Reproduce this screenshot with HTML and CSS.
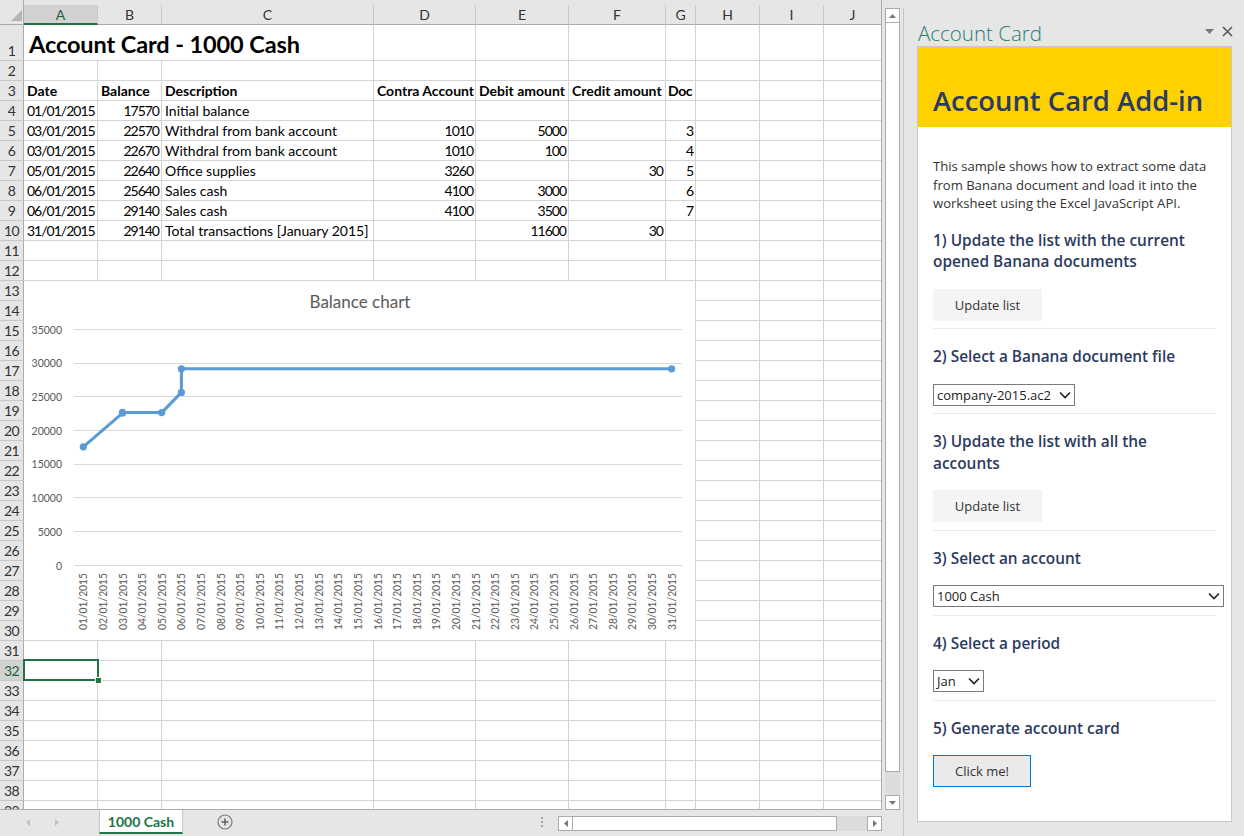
FILE: index.html
```html
<!DOCTYPE html>
<html lang="en">
<head>
<meta charset="utf-8">
<title>Account Card</title>
<link rel="stylesheet" href="styles.css">
</head>
<body>
<div class="excel">
  <div class="main">
    <div class="sheet">
      <div class="grid">
        <div class="corner"><svg width="11" height="11" viewBox="0 0 11 11"><path d="M11 0V11H0Z" fill="#b4b4b4"/></svg></div>
        <div class="h sel">A</div><div class="h">B</div><div class="h">C</div><div class="h">D</div><div class="h">E</div><div class="h">F</div><div class="h">G</div><div class="h">H</div><div class="h">I</div><div class="h">J</div>

        <div class="rh">1</div><div class="c title span3">Account Card - 1000 Cash</div><div class="c"></div><div class="c"></div><div class="c"></div><div class="c"></div><div class="c"></div><div class="c"></div><div class="c"></div>
        <div class="rh">2</div><div class="c"></div><div class="c"></div><div class="c"></div><div class="c"></div><div class="c"></div><div class="c"></div><div class="c"></div><div class="c"></div><div class="c"></div><div class="c"></div>
        <div class="rh">3</div><div class="c b">Date</div><div class="c b">Balance</div><div class="c b">Description</div><div class="c b">Contra Account</div><div class="c b">Debit amount</div><div class="c b">Credit amount</div><div class="c b tight">Doc</div><div class="c"></div><div class="c"></div><div class="c"></div>
        <div class="rh">4</div><div class="c d">01/01/2015</div><div class="c n">17570</div><div class="c">Initial balance</div><div class="c"></div><div class="c"></div><div class="c"></div><div class="c"></div><div class="c"></div><div class="c"></div><div class="c"></div>
        <div class="rh">5</div><div class="c d">03/01/2015</div><div class="c n">22570</div><div class="c">Withdral from bank account</div><div class="c n">1010</div><div class="c n">5000</div><div class="c"></div><div class="c n">3</div><div class="c"></div><div class="c"></div><div class="c"></div>
        <div class="rh">6</div><div class="c d">03/01/2015</div><div class="c n">22670</div><div class="c">Withdral from bank account</div><div class="c n">1010</div><div class="c n">100</div><div class="c"></div><div class="c n">4</div><div class="c"></div><div class="c"></div><div class="c"></div>
        <div class="rh">7</div><div class="c d">05/01/2015</div><div class="c n">22640</div><div class="c">Office supplies</div><div class="c n">3260</div><div class="c"></div><div class="c n">30</div><div class="c n">5</div><div class="c"></div><div class="c"></div><div class="c"></div>
        <div class="rh">8</div><div class="c d">06/01/2015</div><div class="c n">25640</div><div class="c">Sales cash</div><div class="c n">4100</div><div class="c n">3000</div><div class="c"></div><div class="c n">6</div><div class="c"></div><div class="c"></div><div class="c"></div>
        <div class="rh">9</div><div class="c d">06/01/2015</div><div class="c n">29140</div><div class="c">Sales cash</div><div class="c n">4100</div><div class="c n">3500</div><div class="c"></div><div class="c n">7</div><div class="c"></div><div class="c"></div><div class="c"></div>
        <div class="rh">10</div><div class="c d">31/01/2015</div><div class="c n">29140</div><div class="c">Total transactions [January 2015]</div><div class="c"></div><div class="c n">11600</div><div class="c n">30</div><div class="c"></div><div class="c"></div><div class="c"></div><div class="c"></div>
        <div class="rh">11</div><div class="c"></div><div class="c"></div><div class="c"></div><div class="c"></div><div class="c"></div><div class="c"></div><div class="c"></div><div class="c"></div><div class="c"></div><div class="c"></div>
        <div class="rh">12</div><div class="c"></div><div class="c"></div><div class="c"></div><div class="c"></div><div class="c"></div><div class="c"></div><div class="c"></div><div class="c"></div><div class="c"></div><div class="c"></div>
        <div class="rh">13</div><div class="c"></div><div class="c"></div><div class="c"></div><div class="c"></div><div class="c"></div><div class="c"></div><div class="c"></div><div class="c"></div><div class="c"></div><div class="c"></div>
        <div class="rh">14</div><div class="c"></div><div class="c"></div><div class="c"></div><div class="c"></div><div class="c"></div><div class="c"></div><div class="c"></div><div class="c"></div><div class="c"></div><div class="c"></div>
        <div class="rh">15</div><div class="c"></div><div class="c"></div><div class="c"></div><div class="c"></div><div class="c"></div><div class="c"></div><div class="c"></div><div class="c"></div><div class="c"></div><div class="c"></div>
        <div class="rh">16</div><div class="c"></div><div class="c"></div><div class="c"></div><div class="c"></div><div class="c"></div><div class="c"></div><div class="c"></div><div class="c"></div><div class="c"></div><div class="c"></div>
        <div class="rh">17</div><div class="c"></div><div class="c"></div><div class="c"></div><div class="c"></div><div class="c"></div><div class="c"></div><div class="c"></div><div class="c"></div><div class="c"></div><div class="c"></div>
        <div class="rh">18</div><div class="c"></div><div class="c"></div><div class="c"></div><div class="c"></div><div class="c"></div><div class="c"></div><div class="c"></div><div class="c"></div><div class="c"></div><div class="c"></div>
        <div class="rh">19</div><div class="c"></div><div class="c"></div><div class="c"></div><div class="c"></div><div class="c"></div><div class="c"></div><div class="c"></div><div class="c"></div><div class="c"></div><div class="c"></div>
        <div class="rh">20</div><div class="c"></div><div class="c"></div><div class="c"></div><div class="c"></div><div class="c"></div><div class="c"></div><div class="c"></div><div class="c"></div><div class="c"></div><div class="c"></div>
        <div class="rh">21</div><div class="c"></div><div class="c"></div><div class="c"></div><div class="c"></div><div class="c"></div><div class="c"></div><div class="c"></div><div class="c"></div><div class="c"></div><div class="c"></div>
        <div class="rh">22</div><div class="c"></div><div class="c"></div><div class="c"></div><div class="c"></div><div class="c"></div><div class="c"></div><div class="c"></div><div class="c"></div><div class="c"></div><div class="c"></div>
        <div class="rh">23</div><div class="c"></div><div class="c"></div><div class="c"></div><div class="c"></div><div class="c"></div><div class="c"></div><div class="c"></div><div class="c"></div><div class="c"></div><div class="c"></div>
        <div class="rh">24</div><div class="c"></div><div class="c"></div><div class="c"></div><div class="c"></div><div class="c"></div><div class="c"></div><div class="c"></div><div class="c"></div><div class="c"></div><div class="c"></div>
        <div class="rh">25</div><div class="c"></div><div class="c"></div><div class="c"></div><div class="c"></div><div class="c"></div><div class="c"></div><div class="c"></div><div class="c"></div><div class="c"></div><div class="c"></div>
        <div class="rh">26</div><div class="c"></div><div class="c"></div><div class="c"></div><div class="c"></div><div class="c"></div><div class="c"></div><div class="c"></div><div class="c"></div><div class="c"></div><div class="c"></div>
        <div class="rh">27</div><div class="c"></div><div class="c"></div><div class="c"></div><div class="c"></div><div class="c"></div><div class="c"></div><div class="c"></div><div class="c"></div><div class="c"></div><div class="c"></div>
        <div class="rh">28</div><div class="c"></div><div class="c"></div><div class="c"></div><div class="c"></div><div class="c"></div><div class="c"></div><div class="c"></div><div class="c"></div><div class="c"></div><div class="c"></div>
        <div class="rh">29</div><div class="c"></div><div class="c"></div><div class="c"></div><div class="c"></div><div class="c"></div><div class="c"></div><div class="c"></div><div class="c"></div><div class="c"></div><div class="c"></div>
        <div class="rh">30</div><div class="c"></div><div class="c"></div><div class="c"></div><div class="c"></div><div class="c"></div><div class="c"></div><div class="c"></div><div class="c"></div><div class="c"></div><div class="c"></div>
        <div class="rh">31</div><div class="c"></div><div class="c"></div><div class="c"></div><div class="c"></div><div class="c"></div><div class="c"></div><div class="c"></div><div class="c"></div><div class="c"></div><div class="c"></div>
        <div class="rh sel">32</div><div class="c"></div><div class="c"></div><div class="c"></div><div class="c"></div><div class="c"></div><div class="c"></div><div class="c"></div><div class="c"></div><div class="c"></div><div class="c"></div>
        <div class="rh">33</div><div class="c"></div><div class="c"></div><div class="c"></div><div class="c"></div><div class="c"></div><div class="c"></div><div class="c"></div><div class="c"></div><div class="c"></div><div class="c"></div>
        <div class="rh">34</div><div class="c"></div><div class="c"></div><div class="c"></div><div class="c"></div><div class="c"></div><div class="c"></div><div class="c"></div><div class="c"></div><div class="c"></div><div class="c"></div>
        <div class="rh">35</div><div class="c"></div><div class="c"></div><div class="c"></div><div class="c"></div><div class="c"></div><div class="c"></div><div class="c"></div><div class="c"></div><div class="c"></div><div class="c"></div>
        <div class="rh">36</div><div class="c"></div><div class="c"></div><div class="c"></div><div class="c"></div><div class="c"></div><div class="c"></div><div class="c"></div><div class="c"></div><div class="c"></div><div class="c"></div>
        <div class="rh">37</div><div class="c"></div><div class="c"></div><div class="c"></div><div class="c"></div><div class="c"></div><div class="c"></div><div class="c"></div><div class="c"></div><div class="c"></div><div class="c"></div>
        <div class="rh">38</div><div class="c"></div><div class="c"></div><div class="c"></div><div class="c"></div><div class="c"></div><div class="c"></div><div class="c"></div><div class="c"></div><div class="c"></div><div class="c"></div>
        <div class="rh">39</div><div class="c"></div><div class="c"></div><div class="c"></div><div class="c"></div><div class="c"></div><div class="c"></div><div class="c"></div><div class="c"></div><div class="c"></div><div class="c"></div>

        <svg class="chart" width="671" height="359" viewBox="0 0 671 359">
          <text class="ct" x="336" y="27" text-anchor="middle">Balance chart</text>
          <g stroke="#d9d9d9" stroke-width="1">
            <line x1="50" x2="658" y1="48.5" y2="48.5"/>
            <line x1="50" x2="658" y1="82.5" y2="82.5"/>
            <line x1="50" x2="658" y1="115.5" y2="115.5"/>
            <line x1="50" x2="658" y1="149.5" y2="149.5"/>
            <line x1="50" x2="658" y1="183.5" y2="183.5"/>
            <line x1="50" x2="658" y1="216.5" y2="216.5"/>
            <line x1="50" x2="658" y1="250.5" y2="250.5"/>
            <line x1="50" x2="658" y1="284.5" y2="284.5"/>
          </g>
          <g class="yl" text-anchor="end">
            <text x="38" y="52.5">35000</text>
            <text x="38" y="86.2">30000</text>
            <text x="38" y="119.9">25000</text>
            <text x="38" y="153.6">20000</text>
            <text x="38" y="187.3">15000</text>
            <text x="38" y="221">10000</text>
            <text x="38" y="254.8">5000</text>
            <text x="38" y="288.5">0</text>
          </g>
          <polyline points="59.3,165.8 98.5,132.1 98.5,131.4 137.7,131.6 157.4,111.4 157.4,87.8 647.6,87.8" fill="none" stroke="#5b9bd5" stroke-width="3" stroke-linejoin="round" stroke-linecap="round"/>
          <g fill="#5b9bd5">
            <circle cx="59.3" cy="165.8" r="3.6"/>
            <circle cx="98.5" cy="132.1" r="3.6"/>
            <circle cx="98.5" cy="131.4" r="3.6"/>
            <circle cx="137.7" cy="131.6" r="3.6"/>
            <circle cx="157.4" cy="111.4" r="3.6"/>
            <circle cx="157.4" cy="87.8" r="3.6"/>
            <circle cx="647.6" cy="87.8" r="3.6"/>
          </g>
          <g class="xl" text-anchor="end">
            <text transform="translate(63.3 292) rotate(-90)" textLength="57" lengthAdjust="spacingAndGlyphs">01/01/2015</text>
            <text transform="translate(82.9 292) rotate(-90)" textLength="57" lengthAdjust="spacingAndGlyphs">02/01/2015</text>
            <text transform="translate(102.5 292) rotate(-90)" textLength="57" lengthAdjust="spacingAndGlyphs">03/01/2015</text>
            <text transform="translate(122.1 292) rotate(-90)" textLength="57" lengthAdjust="spacingAndGlyphs">04/01/2015</text>
            <text transform="translate(141.7 292) rotate(-90)" textLength="57" lengthAdjust="spacingAndGlyphs">05/01/2015</text>
            <text transform="translate(161.4 292) rotate(-90)" textLength="57" lengthAdjust="spacingAndGlyphs">06/01/2015</text>
            <text transform="translate(181 292) rotate(-90)" textLength="57" lengthAdjust="spacingAndGlyphs">07/01/2015</text>
            <text transform="translate(200.6 292) rotate(-90)" textLength="57" lengthAdjust="spacingAndGlyphs">08/01/2015</text>
            <text transform="translate(220.2 292) rotate(-90)" textLength="57" lengthAdjust="spacingAndGlyphs">09/01/2015</text>
            <text transform="translate(239.8 292) rotate(-90)" textLength="57" lengthAdjust="spacingAndGlyphs">10/01/2015</text>
            <text transform="translate(259.4 292) rotate(-90)" textLength="57" lengthAdjust="spacingAndGlyphs">11/01/2015</text>
            <text transform="translate(279 292) rotate(-90)" textLength="57" lengthAdjust="spacingAndGlyphs">12/01/2015</text>
            <text transform="translate(298.6 292) rotate(-90)" textLength="57" lengthAdjust="spacingAndGlyphs">13/01/2015</text>
            <text transform="translate(318.2 292) rotate(-90)" textLength="57" lengthAdjust="spacingAndGlyphs">14/01/2015</text>
            <text transform="translate(337.8 292) rotate(-90)" textLength="57" lengthAdjust="spacingAndGlyphs">15/01/2015</text>
            <text transform="translate(357.5 292) rotate(-90)" textLength="57" lengthAdjust="spacingAndGlyphs">16/01/2015</text>
            <text transform="translate(377.1 292) rotate(-90)" textLength="57" lengthAdjust="spacingAndGlyphs">17/01/2015</text>
            <text transform="translate(396.7 292) rotate(-90)" textLength="57" lengthAdjust="spacingAndGlyphs">18/01/2015</text>
            <text transform="translate(416.3 292) rotate(-90)" textLength="57" lengthAdjust="spacingAndGlyphs">19/01/2015</text>
            <text transform="translate(435.9 292) rotate(-90)" textLength="57" lengthAdjust="spacingAndGlyphs">20/01/2015</text>
            <text transform="translate(455.5 292) rotate(-90)" textLength="57" lengthAdjust="spacingAndGlyphs">21/01/2015</text>
            <text transform="translate(475.1 292) rotate(-90)" textLength="57" lengthAdjust="spacingAndGlyphs">22/01/2015</text>
            <text transform="translate(494.7 292) rotate(-90)" textLength="57" lengthAdjust="spacingAndGlyphs">23/01/2015</text>
            <text transform="translate(514.3 292) rotate(-90)" textLength="57" lengthAdjust="spacingAndGlyphs">24/01/2015</text>
            <text transform="translate(533.9 292) rotate(-90)" textLength="57" lengthAdjust="spacingAndGlyphs">25/01/2015</text>
            <text transform="translate(553.6 292) rotate(-90)" textLength="57" lengthAdjust="spacingAndGlyphs">26/01/2015</text>
            <text transform="translate(573.2 292) rotate(-90)" textLength="57" lengthAdjust="spacingAndGlyphs">27/01/2015</text>
            <text transform="translate(592.8 292) rotate(-90)" textLength="57" lengthAdjust="spacingAndGlyphs">28/01/2015</text>
            <text transform="translate(612.4 292) rotate(-90)" textLength="57" lengthAdjust="spacingAndGlyphs">29/01/2015</text>
            <text transform="translate(632 292) rotate(-90)" textLength="57" lengthAdjust="spacingAndGlyphs">30/01/2015</text>
            <text transform="translate(651.6 292) rotate(-90)" textLength="57" lengthAdjust="spacingAndGlyphs">31/01/2015</text>
          </g>
        </svg>
        <div class="selbox"><span class="handle"></span></div>
      </div>
    </div>
    <div class="vscroll">
      <div class="sbtn"><svg width="7" height="4" viewBox="0 0 7 4"><path d="M0 4H7L3.5 0Z" fill="#777"/></svg></div>
      <div class="vthumb"></div>
      <div class="vtrack"></div>
      <div class="sbtn"><svg width="7" height="4" viewBox="0 0 7 4"><path d="M0 0H7L3.5 4Z" fill="#777"/></svg></div>
    </div>
  </div>
  <div class="tabs">
    <div class="nav">
      <svg width="4" height="7" viewBox="0 0 4 7"><path d="M4 0V7L0 3.5Z" fill="#c2c2c2"/></svg>
      <svg width="4" height="7" viewBox="0 0 4 7"><path d="M0 0V7L4 3.5Z" fill="#c2c2c2"/></svg>
    </div>
    <div class="tab">1000 Cash</div>
    <div class="addsheet"><svg width="16" height="16" viewBox="0 0 16 16"><circle cx="8" cy="8" r="7" fill="none" stroke="#7a7a7a" stroke-width="1.2"/><path d="M8 4.5V11.5M4.5 8H11.5" stroke="#666" stroke-width="1.6"/></svg></div>
    <div class="spacer"></div>
    <div class="dots"><i></i><i></i><i></i></div>
    <div class="hscroll">
      <div class="sbtn"><svg width="4" height="7" viewBox="0 0 4 7"><path d="M4 0V7L0 3.5Z" fill="#777"/></svg></div>
      <div class="hthumb"></div>
      <div class="htrack"></div>
      <div class="sbtn"><svg width="4" height="7" viewBox="0 0 4 7"><path d="M0 0V7L4 3.5Z" fill="#777"/></svg></div>
    </div>
  </div>
</div>

<aside class="pane">
  <div class="pane-title">
    <span class="pane-name">Account Card</span>
    <span class="pane-ctrl">
      <svg width="9" height="5" viewBox="0 0 9 5"><path d="M0 0H9L4.5 5Z" fill="#777"/></svg>
      <svg width="11" height="11" viewBox="0 0 11 11"><path d="M1 1L10 10M10 1L1 10" stroke="#555" stroke-width="1.5"/></svg>
    </span>
  </div>
  <div class="frame">
    <header class="addin-head"><h1>Account Card Add-in</h1></header>
    <div class="addin-body">
      <p class="intro">This sample shows how to extract some data<br>from Banana document and load it into the<br>worksheet using the Excel JavaScript API.</p>
      <section class="step">
        <h2>1) Update the list with the current<br>opened Banana documents</h2>
        <button class="btn">Update list</button>
      </section>
      <section class="step">
        <h2>2) Select a Banana document file</h2>
        <div class="select s-file"><span>company-2015.ac2</span><svg width="12" height="8" viewBox="0 0 12 8"><path d="M1 1.5L6 6.5L11 1.5" fill="none" stroke="#222" stroke-width="1.6"/></svg></div>
      </section>
      <section class="step">
        <h2>3) Update the list with all the<br>accounts</h2>
        <button class="btn">Update list</button>
      </section>
      <section class="step">
        <h2>3) Select an account</h2>
        <div class="select s-acc"><span>1000 Cash</span><svg width="12" height="8" viewBox="0 0 12 8"><path d="M1 1.5L6 6.5L11 1.5" fill="none" stroke="#222" stroke-width="1.6"/></svg></div>
      </section>
      <section class="step">
        <h2>4) Select a period</h2>
        <div class="select s-per"><span>Jan</span><svg width="12" height="8" viewBox="0 0 12 8"><path d="M1 1.5L6 6.5L11 1.5" fill="none" stroke="#222" stroke-width="1.6"/></svg></div>
      </section>
      <section class="step last">
        <h2>5) Generate account card</h2>
        <button class="btn primary">Click me!</button>
      </section>
    </div>
  </div>
</aside>
</body>
</html>
```

FILE: styles.css
```css
html, body {
  margin: 0;
  padding: 0;
}
body {
  width: 1244px;
  height: 836px;
  overflow: hidden;
  background: #e6e6e6;
  display: flex;
  font-family: Lato, "Liberation Sans", sans-serif;
}

/* ---------- Excel area ---------- */
.excel {
  width: 903px;
  display: flex;
  flex-direction: column;
}
.main {
  height: 810px;
  display: flex;
}
.sheet {
  width: 882px;
  height: 810px;
  box-sizing: border-box;
  border-right: 1px solid #ababab;
  border-bottom: 1px solid #ababab;
  overflow: hidden;
}
.grid {
  position: relative;
  display: grid;
  grid-template-columns: 24px 74px 64px 212px 102px 93px 97px 30px 64px 64px 58px;
  grid-template-rows: 25px 36px repeat(38, 20px);
  background: #e6e6e6;
  color: #000;
}
.corner {
  display: flex;
  align-items: flex-end;
  justify-content: flex-end;
  padding: 0 1px 3px 0;
  border-right: 1px solid #ababab;
  border-bottom: 1px solid #ababab;
}
.h {
  align-self: end;
  height: 20px;
  box-sizing: border-box;
  display: flex;
  align-items: center;
  justify-content: center;
  border-right: 1px solid #c8c8c8;
  border-bottom: 1px solid #ababab;
  font-size: 14px;
  color: #333;
}
.h.sel {
  background: #d2d2d2;
  border-bottom: 2px solid #217346;
  color: #1e5e3a;
}
.rh {
  display: flex;
  align-items: flex-end;
  justify-content: center;
  border-right: 1px solid #ababab;
  border-bottom: 1px solid #c8c8c8;
  font-size: 14px;
  line-height: 19px;
  color: #333;
  letter-spacing: -0.6px;
}
.rh.sel {
  background: #d2d2d2;
  color: #1e5e3a;
}
.c {
  background: #fff;
  border-right: 1px solid #d4d4d4;
  border-bottom: 1px solid #d4d4d4;
  display: flex;
  align-items: flex-end;
  padding: 0 3px;
  font-size: 14px;
  line-height: 19px;
  white-space: nowrap;
  min-width: 0;
}
.c.n {
  justify-content: flex-end;
  padding-right: 2px;
  letter-spacing: -1px;
}
.c.d {
  letter-spacing: -1px;
}
.c.b {
  font-weight: 700;
}
.c.tight {
  padding-left: 2px;
  letter-spacing: -0.4px;
}
.c.title {
  font-size: 23.5px;
  font-weight: 700;
  line-height: 32px;
  padding-left: 5px;
  letter-spacing: -0.1px;
}
.span3 {
  grid-column: span 3;
}

.chart {
  position: absolute;
  left: 24px;
  top: 281px;
  background: #fff;
  font-family: Lato, "Liberation Sans", sans-serif;
}
.chart .ct {
  font-size: 17px;
  fill: #595959;
}
.chart .yl {
  font-size: 10.5px;
  fill: #595959;
}
.chart .xl {
  font-size: 11px;
  fill: #595959;
}

.selbox {
  position: absolute;
  left: 23px;
  top: 659px;
  width: 76px;
  height: 22px;
  box-sizing: border-box;
  border: 2px solid #217346;
}
.handle {
  position: absolute;
  right: -5px;
  bottom: -5px;
  width: 5px;
  height: 5px;
  background: #217346;
  border: 1px solid #fff;
}

/* scrollbars */
.vscroll {
  width: 15px;
  margin: 8px 0 0 3px;
  height: 802px;
  display: flex;
  flex-direction: column;
}
.sbtn {
  width: 15px;
  height: 15px;
  flex: none;
  box-sizing: border-box;
  border: 1px solid #ababab;
  background: #fff;
  display: flex;
  align-items: center;
  justify-content: center;
}
.vthumb {
  height: 749px;
  box-sizing: border-box;
  border: 1px solid #ababab;
  border-top: none;
  background: #fff;
}
.vtrack {
  flex: 1;
  background: #dcdcdc;
}

.tabs {
  height: 26px;
  display: flex;
}
.nav {
  width: 99px;
  display: flex;
  align-items: center;
  padding-left: 26px;
  gap: 25px;
  box-sizing: border-box;
  height: 24px;
}
.tab {
  width: 84px;
  height: 24px;
  box-sizing: border-box;
  background: #fff;
  border-left: 1px solid #c6c6c6;
  border-right: 1px solid #c6c6c6;
  border-bottom: 2px solid #217346;
  display: flex;
  align-items: center;
  justify-content: center;
  font-size: 14px;
  font-weight: 700;
  color: #217346;
}
.addsheet {
  margin-left: 34px;
  height: 24px;
  display: flex;
  align-items: center;
}
.spacer {
  flex: 1;
}
.dots {
  width: 4px;
  display: flex;
  flex-direction: column;
  justify-content: center;
  gap: 2px;
  height: 24px;
  margin-right: 14px;
}
.dots i {
  display: block;
  width: 2px;
  height: 2px;
  background: #a6a6a6;
  margin-left: 1px;
}
.hscroll {
  width: 324px;
  height: 15px;
  margin: 6px 21px 0 0;
  display: flex;
}
.hthumb {
  width: 264px;
  box-sizing: border-box;
  border: 1px solid #ababab;
  border-left: none;
  background: #fff;
}
.htrack {
  flex: 1;
  background: #dcdcdc;
}

/* ---------- Task pane ---------- */
.pane {
  width: 341px;
  box-sizing: border-box;
  margin-top: 8px;
  border-left: 1px solid #c6c6c6;
  padding: 0 12px 0 13px;
  font-family: "Open Sans", "Noto Sans", sans-serif;
}
.pane-title {
  height: 38px;
  box-sizing: border-box;
  padding-top: 12px;
  display: flex;
  align-items: flex-start;
}
.pane-name {
  padding-left: 1px;
  font-size: 20.5px;
  font-weight: 300;
  line-height: 26px;
  color: #2a7f7a;
}
.pane-ctrl {
  margin-left: auto;
  margin-right: -1px;
  height: 22px;
  display: flex;
  align-items: center;
  gap: 8px;
}
.frame {
  height: 776px;
  box-sizing: border-box;
  border: 1px solid #c8c8c8;
  background: #fff;
}
.addin-head {
  height: 80px;
  box-sizing: border-box;
  background: #ffd100;
  padding: 36px 0 0 15px;
}
.addin-head h1 {
  margin: 0;
  font-size: 27.4px;
  font-weight: 600;
  line-height: 36px;
  color: #2b3a60;
  white-space: nowrap;
}
.addin-body {
  padding: 0 15px;
}
.intro {
  margin: 30px 0 0;
  font-size: 13.1px;
  line-height: 18.5px;
  color: #333;
  white-space: nowrap;
}
.step {
  padding: 17px 0 7.5px;
  border-bottom: 1px solid #eaeaea;
}
.step.last {
  border-bottom: none;
}
.step h2 {
  margin: 0 0 16px;
  font-size: 15.4px;
  font-weight: 600;
  line-height: 21.5px;
  color: #2b3a60;
  white-space: nowrap;
}
.btn {
  display: block;
  width: 109px;
  height: 32px;
  border: none;
  background: #f4f4f4;
  font-family: "Open Sans", "Noto Sans", sans-serif;
  font-size: 13px;
  color: #333;
  padding: 0;
}
.btn.primary {
  width: 98px;
  border: 1px solid #0078d7;
  background: #eaeaea;
}
.select {
  height: 22px;
  box-sizing: border-box;
  border: 1px solid #7a7a7a;
  display: flex;
  align-items: center;
  justify-content: space-between;
  padding: 0 3px 0 3px;
  font-size: 13px;
  color: #222;
  background: #fff;
}
.s-file { width: 142px; }
.s-acc { width: 291px; }
.s-per { width: 51px; }
```
